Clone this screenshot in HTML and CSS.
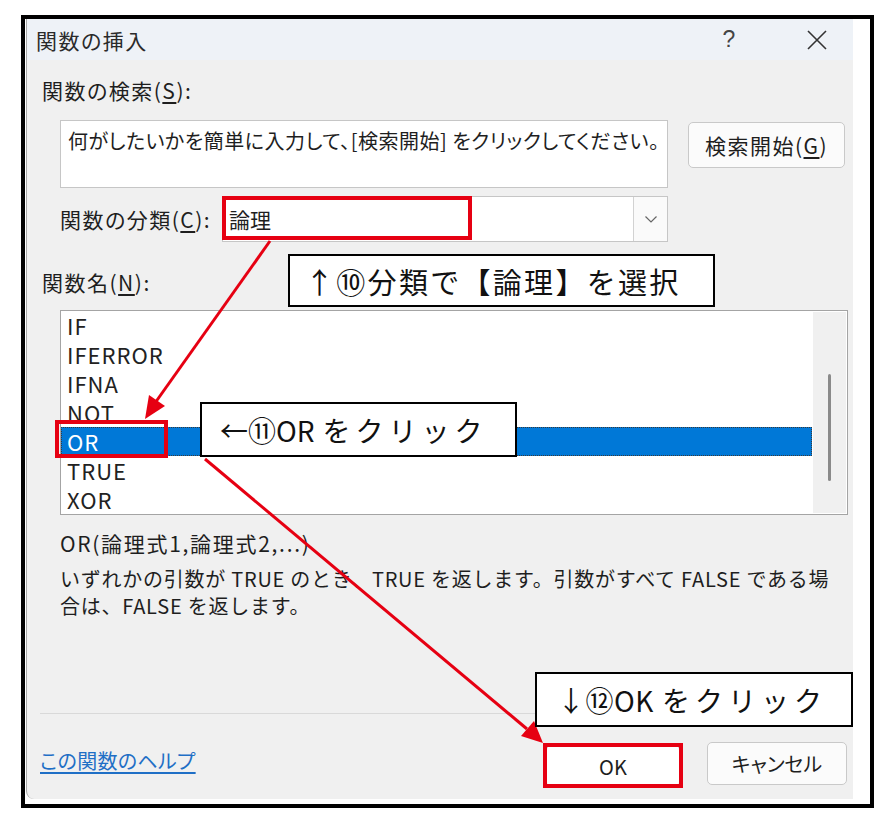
FILE: index.html
```html
<!DOCTYPE html>
<html lang="ja">
<head>
<meta charset="utf-8">
<title>関数の挿入</title>
<link rel="stylesheet" href="styles.css">
</head>
<body>
<div class="page">
  <div class="frame">
    <div class="dialog">
      <div class="titlebar">
        <span class="title">関数の挿入</span>
        <span class="help">?</span>
        <svg class="close" width="22" height="20" viewBox="0 0 22 20"><path d="M2 1 L20 19 M20 1 L2 19" stroke="#333" stroke-width="1.6" fill="none"/></svg>
      </div>
      <div class="body">
        <div class="label">関数の検索(<u>S</u>):</div>
        <div class="search-row">
          <div class="searchbox">何がしたいかを簡単に入力して、[検索開始] をクリックしてください。</div>
          <div class="btn search-btn">検索開始(<u>G</u>)</div>
        </div>
        <div class="cat-row">
          <div class="cat-label">関数の分類(<u>C</u>):</div>
          <div class="select">
            <span class="select-value">論理</span>
            <span class="select-btn"><svg width="12" height="7" viewBox="0 0 12 7"><path d="M0.5 0.5 L6 6 L11.5 0.5" stroke="#666" stroke-width="1.2" fill="none"/></svg></span>
          </div>
        </div>
        <div class="label names-label">関数名(<u>N</u>):</div>
        <div class="listbox">
          <ul class="items">
            <li>IF</li>
            <li>IFERROR</li>
            <li>IFNA</li>
            <li>NOT</li>
            <li class="selected">OR</li>
            <li>TRUE</li>
            <li>XOR</li>
          </ul>
          <div class="scrollbar"><div class="thumb"></div></div>
        </div>
        <div class="syntax">OR(論理式1,論理式2,...)</div>
        <p class="desc">いずれかの引数が TRUE のとき、TRUE を返します。引数がすべて FALSE である場<br>合は、FALSE を返します。</p>
      </div>
      <div class="separator"></div>
      <div class="footer">
        <a class="helplink">この関数のヘルプ</a>
        <div class="btn ok">OK</div>
        <div class="btn cancel">キャンセル</div>
      </div>
    </div>
  </div>

  <div class="hl hl-cat"></div>
  <div class="hl hl-or"></div>
  <div class="hl hl-ok"></div>

  <svg class="arrows" width="886" height="820" viewBox="0 0 886 820">
    <line x1="270" y1="241" x2="155" y2="403" stroke="#e60012" stroke-width="3"/>
    <polygon points="145,419 165,406 149,395" fill="#e60012"/>
    <line x1="205" y1="459" x2="527" y2="729" stroke="#e60012" stroke-width="3"/>
    <polygon points="543,743 521,736 534,721" fill="#e60012"/>
  </svg>

  <div class="note note1">↑⑩分類で【論理】を選択</div>
  <div class="note note2">←⑪OR <span class="kana">をクリック</span></div>
  <div class="note note3">↓⑫OK <span class="kana">をクリック</span></div>
</div>
</body>
</html>
```

FILE: styles.css
```css
html, body {
  margin: 0;
  padding: 0;
  background: #ffffff;
}

.page {
  position: relative;
  box-sizing: border-box;
  width: 886px;
  height: 820px;
  padding: 15px 0 0 21px;
  font-family: "Noto Sans CJK JP", "Noto Sans", sans-serif;
  font-feature-settings: "palt" 1;
  color: #1e1e1e;
}

.frame {
  box-sizing: border-box;
  width: 853px;
  height: 793px;
  border: 4px solid #000;
  display: flex;
  padding: 0 17px 5px 1px;
}

.dialog {
  flex: 1;
  display: flex;
  flex-direction: column;
  background: #f0f0f0;
  border-left: 1px solid #a8a8a8;
  border-bottom-left-radius: 8px;
}

.titlebar {
  height: 41px;
  flex: none;
  background: #eef2f7;
  display: flex;
  align-items: center;
  padding: 0 25px 0 9px;
}

.title {
  font-size: 21px;
  line-height: 28px;
  letter-spacing: 1.5px;
  color: #2a2a2a;
}

.help {
  margin-left: auto;
  width: 20px;
  text-align: center;
  font-family: "Liberation Sans", sans-serif;
  font-size: 23px;
  color: #444;
}

.close {
  margin-left: 67px;
}

.body {
  flex: 1;
  padding: 16px 0 0 15px;
  font-size: 21px;
}

.label {
  height: 28px;
  line-height: 28px;
  letter-spacing: 1.5px;
}

u {
  text-decoration: underline;
  text-underline-offset: 3px;
}

.search-row {
  display: flex;
  align-items: flex-start;
  margin: 16px 0 0 18px;
}

.searchbox {
  box-sizing: border-box;
  width: 608px;
  height: 68px;
  background: #fff;
  border: 1px solid #c6c6c6;
  padding: 7px 7px;
  font-size: 20px;
  line-height: 26px;
  letter-spacing: 0.5px;
  white-space: nowrap;
  overflow: hidden;
}

.btn {
  box-sizing: border-box;
  display: flex;
  align-items: center;
  justify-content: center;
  background: #fbfbfb;
  border: 1px solid #c9c9c9;
  border-radius: 5px;
  font-size: 20px;
}

.search-btn {
  margin: 2px 0 0 20px;
  width: 157px;
  height: 46px;
  font-size: 21px;
  letter-spacing: 1.5px;
}

.cat-row {
  display: flex;
  align-items: center;
  margin: 8px 0 0 18px;
  height: 46px;
}

.cat-label {
  width: 162px;
  line-height: 28px;
  letter-spacing: 1.5px;
}

.select {
  box-sizing: border-box;
  width: 446px;
  height: 46px;
  background: #fff;
  border: 1px solid #c6c6c6;
  display: flex;
}

.select-value {
  flex: 1;
  padding-left: 6px;
  line-height: 44px;
  font-size: 21px;
}

.select-btn {
  width: 33px;
  border-left: 1px solid #d2d2d2;
  background: #fafafa;
  display: flex;
  align-items: center;
  justify-content: center;
}

.names-label {
  margin-top: 26px;
}

.listbox {
  box-sizing: border-box;
  margin: 14px 0 0 18px;
  width: 788px;
  height: 205px;
  background: #fff;
  border: 1px solid #a4a4a4;
  display: flex;
}

.items {
  flex: 1;
  list-style: none;
  margin: 0;
  padding: 0;
}

.items li {
  height: 29px;
  line-height: 29px;
  padding-left: 6px;
  font-size: 22px;
  letter-spacing: 1px;
  color: #222;
}

.items li.selected {
  background: #0078d7;
  color: #fff;
  outline: 1px dotted #3a3a3a;
  outline-offset: -1px;
  margin-right: 1px;
}

.scrollbar {
  width: 33px;
  margin: 1px 1px 1px 0;
  background: #f0f0f0;
  padding-top: 62px;
  box-sizing: border-box;
}

.thumb {
  width: 3px;
  height: 107px;
  margin-left: 15px;
  background: #8a8a8a;
  border-radius: 2px;
}

.syntax {
  margin: 14px 0 0 18px;
  line-height: 28px;
  font-size: 21px;
  letter-spacing: 1.7px;
  font-feature-settings: normal;
}

.desc {
  margin: 8px 0 0 18px;
  line-height: 27px;
  font-size: 20px;
  letter-spacing: 0.75px;
  font-feature-settings: normal;
  white-space: nowrap;
}

.separator {
  height: 1px;
  flex: none;
  margin-left: 13px;
  background: #d9d9d9;
}

.footer {
  box-sizing: border-box;
  height: 85px;
  flex: none;
  display: flex;
  align-items: flex-start;
  padding: 28px 6px 0 13px;
}

.helplink {
  margin-top: 5px;
  line-height: 28px;
  font-size: 20px;
  letter-spacing: 0.3px;
  color: #1f6fc6;
  text-decoration: underline;
  text-underline-offset: 3px;
}

.ok {
  margin: 3px 0 0 auto;
  width: 134px;
  height: 42px;
  background: #fff;
}

.cancel {
  margin-left: 27px;
  width: 140px;
  height: 43px;
}

.hl {
  position: absolute;
  box-sizing: border-box;
  border: 4px solid #e60012;
}

.hl-cat { left: 222px; top: 196px; width: 250px; height: 44px; }
.hl-or  { left: 55px;  top: 420px; width: 113px; height: 38px; }
.hl-ok  { left: 543px; top: 743px; width: 140px; height: 45px; }

.arrows {
  position: absolute;
  left: 0;
  top: 0;
  pointer-events: none;
}

.note {
  position: absolute;
  box-sizing: border-box;
  background: #fff;
  border: 2px solid #000;
  display: flex;
  align-items: center;
  font-size: 28px;
  color: #111;
  white-space: nowrap;
  font-feature-settings: normal;
}

.note1 { left: 288px; top: 254px; width: 427px; height: 53px; padding-left: 15px; font-size: 29px; letter-spacing: 2.3px; }
.note2 { left: 200px; top: 402px; width: 317px; height: 55px; padding-left: 18px; }
.note3 { left: 535px; top: 672px; width: 318px; height: 55px; padding-left: 20px; letter-spacing: 0.5px; }

.kana {
  margin-left: 8px;
  letter-spacing: 5px;
}
```
